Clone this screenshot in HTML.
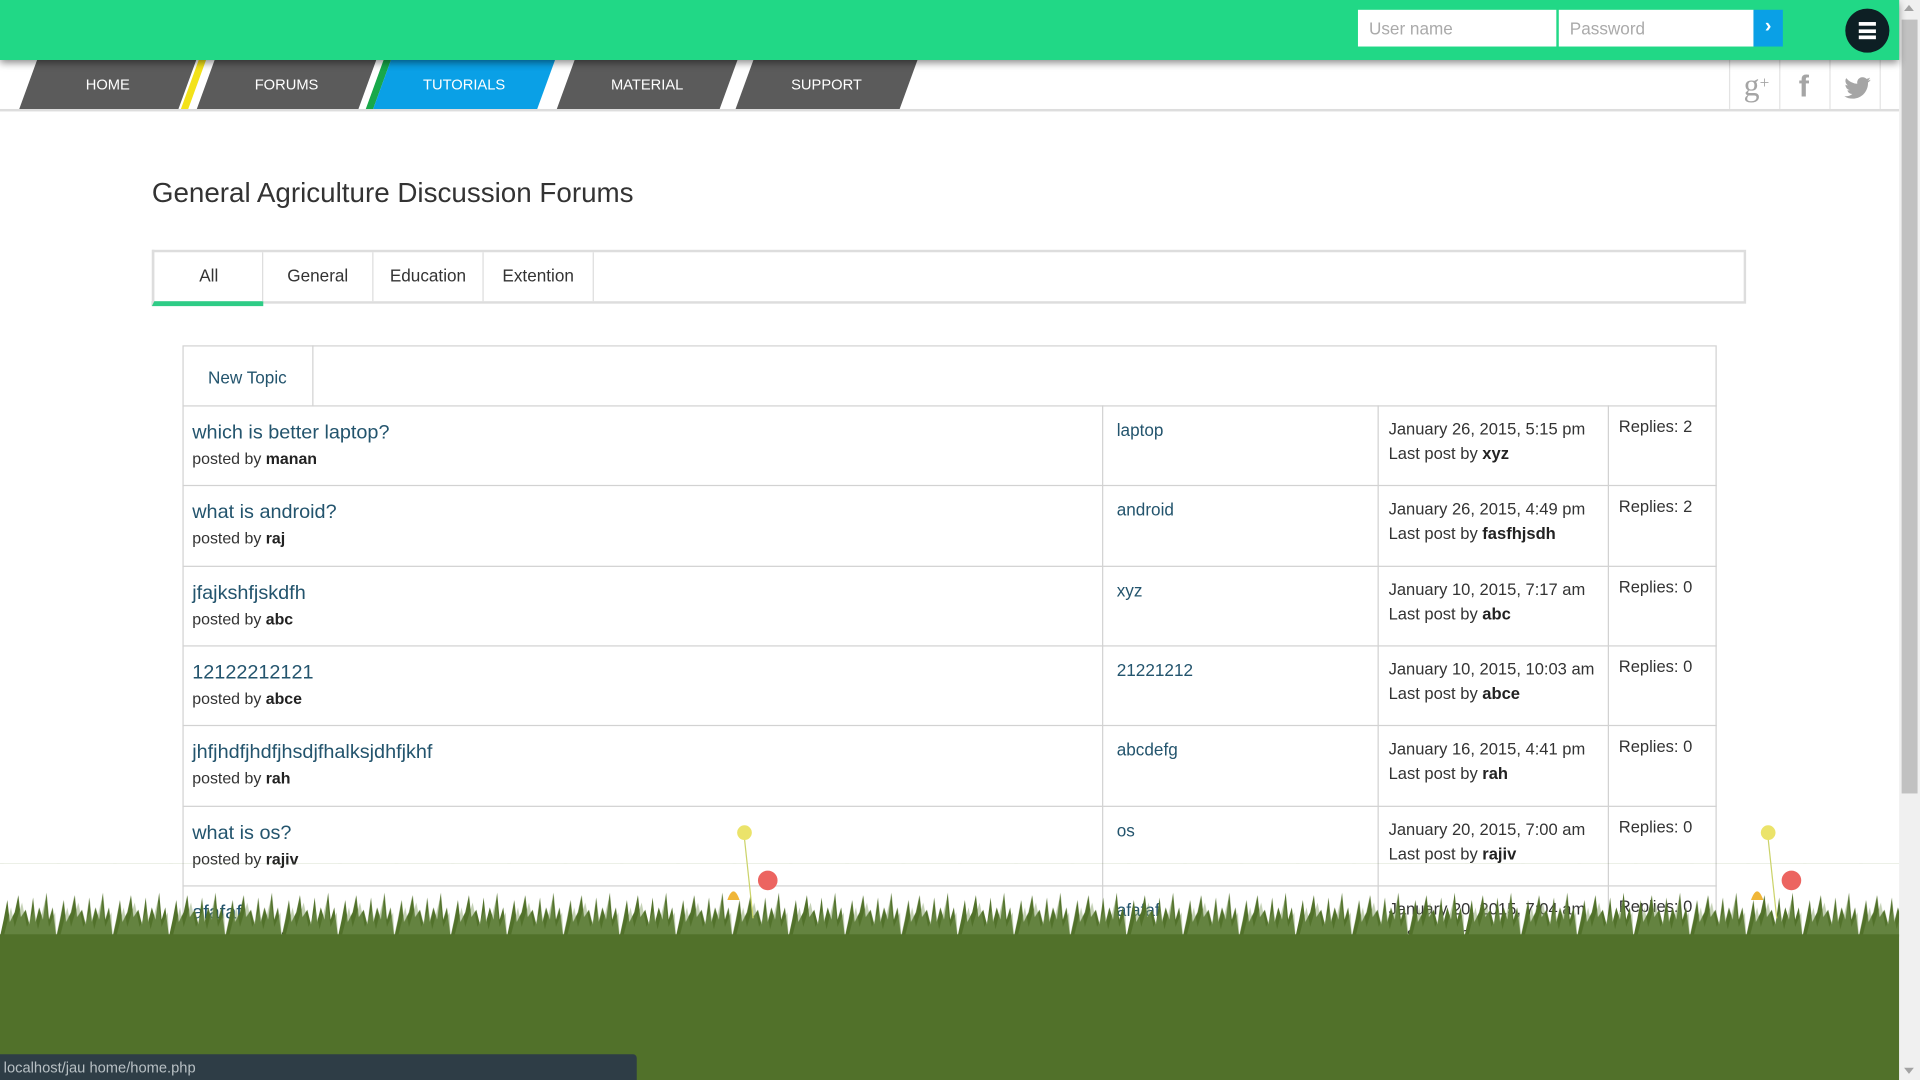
<!DOCTYPE html>
<html><head><meta charset="utf-8"><style>
html,body{margin:0;padding:0;width:1920px;height:1080px;overflow:hidden;background:#fff;}
#w{position:absolute;left:0;top:0;width:1568px;height:882px;transform:scale(1.22449);transform-origin:0 0;font-family:"Liberation Sans",Arial,sans-serif;color:#333;overflow:hidden;background:#fff}
.a{position:absolute}
.top{left:0;top:0;width:1551px;height:49px;background:#21d886;box-shadow:0 3px 6px rgba(0,0,0,.45);z-index:3}
.inp{top:8px;height:30px;background:#fff;color:#aaa;font-size:14px;line-height:30px;padding-left:9px;box-sizing:border-box}
.tab{top:49px;height:40px;color:#fff;font-size:12px;line-height:40px;text-align:center}
.tab i{position:absolute;inset:0;transform:skewX(-20deg);background:#5b5b5b}
.tab span{position:relative}
.row{position:absolute;left:149px;width:1253px;height:66px;border-top:1px solid #d2d2d2;box-sizing:border-box}
.t{position:absolute;left:8px;top:12px;font-size:16.2px;color:#23546d}
.p{position:absolute;left:8px;top:35px;font-size:13px;color:#333}
.c2{position:absolute;left:763px;top:11px;font-size:14px;color:#23546d}
.c3{position:absolute;left:985px;top:9px;font-size:13.5px;line-height:19.5px;color:#333}
.c4{position:absolute;left:1173px;top:9px;font-size:13.5px;color:#333}
b{color:#222}
</style></head><body><div id="w">
<div class="a top"></div>
<div class="a inp" style="left:1109px;width:162px;z-index:4">User name</div>
<div class="a inp" style="left:1273px;width:159px;z-index:4">Password</div>
<div class="a" style="left:1432px;top:8px;width:24px;height:30px;background:#0aa0e6;z-index:4;color:#fff;font-weight:bold;font-size:16px;text-align:center;line-height:28px">&#x203A;</div>
<div class="a" style="left:1507px;top:7px;width:36px;height:36px;border-radius:50%;background:#0d1f24;z-index:4">
 <div class="a" style="left:11px;top:11px;width:14px;height:3px;background:#fff"></div>
 <div class="a" style="left:11px;top:16.5px;width:14px;height:3px;background:#fff"></div>
 <div class="a" style="left:11px;top:22px;width:14px;height:3px;background:#fff"></div>
</div>
<div class="a" style="left:0;top:49px;width:1551px;height:40px;border-bottom:2px solid #ddd"></div>
<div class="a tab" style="left:23px;width:130px"><i></i><span>HOME</span></div>
<div class="a" style="left:155px;top:49px;width:6px;height:40px;background:#f3e21a;transform:skewX(-20deg)"></div>
<div class="a tab" style="left:168px;width:132px"><i></i><span>FORUMS</span></div>
<div class="a" style="left:306px;top:49px;width:6px;height:40px;background:#18a84a;transform:skewX(-20deg)"></div>
<div class="a tab" style="left:312px;width:134px"><i style="background:#0aa0e6"></i><span>TUTORIALS</span></div>
<div class="a tab" style="left:462px;width:133px"><i></i><span>MATERIAL</span></div>
<div class="a tab" style="left:608px;width:134px"><i></i><span>SUPPORT</span></div>
<div class="a" style="left:1412px;top:49px;width:122px;height:40px;border-left:1px solid #e3e3e3;border-right:1px solid #e3e3e3"></div>
<div class="a" style="left:1453px;top:49px;width:1px;height:40px;background:#e3e3e3"></div>
<div class="a" style="left:1494px;top:49px;width:1px;height:40px;background:#e3e3e3"></div>
<div class="a" style="left:1424px;top:55px;font-family:'Liberation Serif',serif;font-size:26px;color:#a5a5a5">g<span style="font-size:14px;vertical-align:6px">+</span></div>
<div class="a" style="left:1469px;top:57px;font-size:25px;font-weight:bold;color:#a5a5a5">f</div>
<svg class="a" style="left:1506px;top:63px" width="22" height="18" viewBox="0 0 24 20"><path fill="#a5a5a5" d="M24 2.4a9.8 9.8 0 0 1-2.8.8A4.9 4.9 0 0 0 23.3.4a9.9 9.9 0 0 1-3.1 1.2A4.9 4.9 0 0 0 11.8 6 14 14 0 0 1 1.7.9a4.9 4.9 0 0 0 1.5 6.6A4.9 4.9 0 0 1 1 6.9a4.9 4.9 0 0 0 3.9 4.9 4.9 4.9 0 0 1-2.2.1 4.9 4.9 0 0 0 4.6 3.4A9.9 9.9 0 0 1 0 17.3 14 14 0 0 0 7.5 19.5c9.1 0 14-7.5 14-14v-.6A10 10 0 0 0 24 2.4z"/></svg>

<div class="a" style="left:124px;top:144px;font-size:22.7px;color:#333">General Agriculture Discussion Forums</div>
<div class="a" style="left:124px;top:204px;width:1302px;height:44px;border:2px solid #ddd;box-sizing:border-box"></div>
<div class="a" style="left:124px;top:204px;width:91px;height:46px;border-bottom:4px solid #2ecc86;border-left:2px solid #ddd;box-sizing:border-box;text-align:center;line-height:42px;font-size:14px">All</div>
<div class="a" style="left:214px;top:206px;width:1px;height:40px;background:#ddd"></div>
<div class="a" style="left:304px;top:206px;width:1px;height:40px;background:#ddd"></div>
<div class="a" style="left:394px;top:206px;width:1px;height:40px;background:#ddd"></div>
<div class="a" style="left:484px;top:206px;width:1px;height:40px;background:#ddd"></div>
<div class="a" style="left:215px;top:217px;width:89px;text-align:center;font-size:14px">General</div>
<div class="a" style="left:305px;top:217px;width:89px;text-align:center;font-size:14px">Education</div>
<div class="a" style="left:395px;top:217px;width:89px;text-align:center;font-size:14px">Extention</div>

<div class="a" style="left:149px;top:282px;width:1253px;height:600px;border:1px solid #d2d2d2;box-sizing:border-box"></div>
<div class="a" style="left:149px;top:282px;width:107px;height:50px;border-right:1px solid #d2d2d2;box-sizing:border-box;text-align:center;line-height:52px;font-size:14px;color:#23546d">New Topic</div>
<div class="a" style="left:900px;top:331px;width:1px;height:551px;background:#d2d2d2"></div>
<div class="a" style="left:1125px;top:331px;width:1px;height:551px;background:#d2d2d2"></div>
<div class="a" style="left:1313px;top:331px;width:1px;height:551px;background:#d2d2d2"></div>

<div class="row" style="top:331px"><div class="t">which is better laptop?</div><div class="p">posted by <b>manan</b></div><div class="c2">laptop</div><div class="c3">January 26, 2015, 5:15 pm<br>Last post by <b>xyz</b></div><div class="c4">Replies: 2</div></div>
<div class="row" style="top:396px"><div class="t">what is android?</div><div class="p">posted by <b>raj</b></div><div class="c2">android</div><div class="c3">January 26, 2015, 4:49 pm<br>Last post by <b>fasfhjsdh</b></div><div class="c4">Replies: 2</div></div>
<div class="row" style="top:462px"><div class="t">jfajkshfjskdfh</div><div class="p">posted by <b>abc</b></div><div class="c2">xyz</div><div class="c3">January 10, 2015, 7:17 am<br>Last post by <b>abc</b></div><div class="c4">Replies: 0</div></div>
<div class="row" style="top:527px"><div class="t">12122212121</div><div class="p">posted by <b>abce</b></div><div class="c2">21221212</div><div class="c3">January 10, 2015, 10:03 am<br>Last post by <b>abce</b></div><div class="c4">Replies: 0</div></div>
<div class="row" style="top:592px"><div class="t">jhfjhdfjhdfjhsdjfhalksjdhfjkhf</div><div class="p">posted by <b>rah</b></div><div class="c2">abcdefg</div><div class="c3">January 16, 2015, 4:41 pm<br>Last post by <b>rah</b></div><div class="c4">Replies: 0</div></div>
<div class="row" style="top:658px"><div class="t">what is os?</div><div class="p">posted by <b>rajiv</b></div><div class="c2">os</div><div class="c3">January 20, 2015, 7:00 am<br>Last post by <b>rajiv</b></div><div class="c4">Replies: 0</div></div>
<div class="row" style="top:723px"><div class="t">afafaf</div><div class="p">posted by <b>raj</b></div><div class="c2">afafaf</div><div class="c3">January 20, 2015, 7:04 am<br>Last post by <b>raj</b></div><div class="c4">Replies: 0</div></div>

<svg class="a" style="left:0;top:705px;overflow:visible" width="1551" height="177">
<defs><pattern id="g" width="46" height="60" patternUnits="userSpaceOnUse">
<path fill="#51712a" d="M0 60 L3 46 L6 30 L8 48 L12 40 L15 26 L17 44 L21 38 L24 50 L27 28 L29 48 L32 36 L35 46 L38 24 L40 46 L43 36 L46 60 Z"/>
<path fill="#7d9a5a" opacity=".45" d="M3 60 L9 36 L12 52 L18 32 L22 52 L28 38 L31 54 L37 30 L40 52 L45 40 L46 60Z"/>
</pattern></defs>
<rect x="0" y="0" width="1551" height="60" fill="url(#g)"/>
<rect x="0" y="58" width="1551" height="119" fill="#51712a"/>
<g><line x1="608" y1="-20" x2="615" y2="45" stroke="#cbd36a"/><circle cx="608" cy="-25" r="6" fill="#ebe36a"/><circle cx="627" cy="14" r="8" fill="#ec6460"/><path d="M594 30 q5-14 10 0z" fill="#f0b638"/>
<line x1="1444" y1="-20" x2="1451" y2="45" stroke="#cbd36a"/><circle cx="1444" cy="-25" r="6" fill="#ebe36a"/><circle cx="1463" cy="14" r="8" fill="#ec6460"/><path d="M1430 30 q5-14 10 0z" fill="#f0b638"/></g>
</svg>
<div class="a" style="left:0;top:861px;width:520px;height:21px;background:#2e3d46;border-radius:0 3px 0 0;color:#b8c0c4;font-size:12px;line-height:22px;padding-left:3px;box-sizing:border-box">localhost/jau home/home.php</div>

<div class="a" style="left:1551px;top:0;width:17px;height:882px;background:#f0f0f0"></div>
<div class="a" style="left:1553px;top:16px;width:13px;height:632px;background:#c1c1c1"></div>
<div class="a" style="left:1555px;top:4px;width:0;height:0;border:4px solid transparent;border-bottom:5px solid #a3a3a3;border-top:0"></div>
<div class="a" style="left:1555px;top:872px;width:0;height:0;border:4px solid transparent;border-top:5px solid #a3a3a3;border-bottom:0"></div>
</div></body></html>
